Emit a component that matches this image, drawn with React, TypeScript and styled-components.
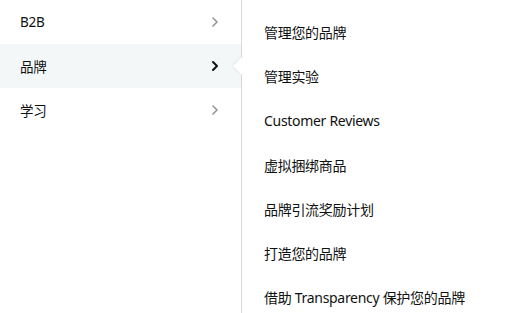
import React from 'react';
import styled, { createGlobalStyle } from 'styled-components';

const GlobalStyle = createGlobalStyle`
  html, body {
    margin: 0;
    padding: 0;
    background: #ffffff;
  }
  body {
    font-family: 'Noto Sans', 'Noto Sans CJK SC', sans-serif;
    color: #0f1111;
  }
`;

const Menu = styled.div`
  display: flex;
  width: 513px;
  height: 313px;
  overflow: hidden;
`;

const Categories = styled.div`
  width: 241px;
  flex-shrink: 0;
  border-right: 1px solid #d5d9d9;
  display: flex;
  flex-direction: column;
`;

const CategoryRow = styled.div<{ $active?: boolean }>`
  position: relative;
  height: 44px;
  flex-shrink: 0;
  display: flex;
  align-items: center;
  justify-content: space-between;
  padding: 0 22px 0 20px;
  font-size: 13.5px;
  letter-spacing: -0.2px;
  background: ${(p) => (p.$active ? '#f3f7f8' : 'transparent')};
  color: #0f1111;
`;

const Pointer = styled.span`
  position: absolute;
  right: -1px;
  top: 13px;
  width: 0;
  height: 0;
  border-top: 9px solid transparent;
  border-bottom: 9px solid transparent;
  border-right: 9px solid #ffffff;
  filter: drop-shadow(-1px 0 1px rgba(0, 0, 0, 0.08));
`;

const Chevron = ({ active }: { active?: boolean }) => (
  <svg width="8" height="12" viewBox="0 0 8 12">
    <path
      d="M2 2 L6 6 L2 10"
      fill="none"
      stroke={active ? '#0f1111' : '#8d9096'}
      strokeWidth={active ? 2 : 1.5}
      strokeLinecap="round"
      strokeLinejoin="round"
    />
  </svg>
);

const Links = styled.div`
  flex: 1;
  display: flex;
  flex-direction: column;
  padding-top: 10px;
`;

const LinkItem = styled.a`
  height: 44.2px;
  flex-shrink: 0;
  display: flex;
  align-items: center;
  padding-left: 22px;
  font-size: 14px;
  letter-spacing: -0.3px;
  color: #0f1111;
  text-decoration: none;
  white-space: nowrap;
`;

const categories = ['B2B', '品牌', '学习'];
const links = [
  '管理您的品牌',
  '管理实验',
  'Customer Reviews',
  '虚拟捆绑商品',
  '品牌引流奖励计划',
  '打造您的品牌',
  '借助 Transparency 保护您的品牌',
];

export default function App() {
  return (
    <>
      <GlobalStyle />
      <Menu>
        <Categories>
          {categories.map((c, i) => (
            <CategoryRow key={c} $active={i === 1}>
              <span>{c}</span>
              <Chevron active={i === 1} />
              {i === 1 && <Pointer />}
            </CategoryRow>
          ))}
        </Categories>
        <Links>
          {links.map((l) => (
            <LinkItem key={l} href="#">
              {l}
            </LinkItem>
          ))}
        </Links>
      </Menu>
    </>
  );
}
